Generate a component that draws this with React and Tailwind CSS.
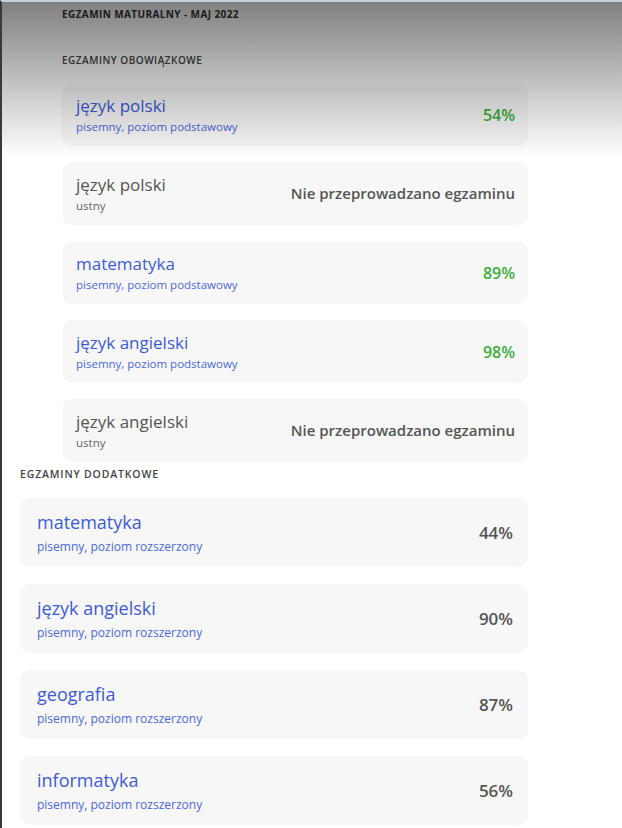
// App.jsx — wyniki egzaminu maturalnego
const OBOWIAZKOWE = [
  { nazwa: 'język polski', typ: 'pisemny, poziom podstawowy', wynik: '54%' },
  { nazwa: 'język polski', typ: 'ustny', wynik: null },
  { nazwa: 'matematyka', typ: 'pisemny, poziom podstawowy', wynik: '89%' },
  { nazwa: 'język angielski', typ: 'pisemny, poziom podstawowy', wynik: '98%' },
  { nazwa: 'język angielski', typ: 'ustny', wynik: null },
]

const DODATKOWE = [
  { nazwa: 'matematyka', typ: 'pisemny, poziom rozszerzony', wynik: '44%' },
  { nazwa: 'język angielski', typ: 'pisemny, poziom rozszerzony', wynik: '90%' },
  { nazwa: 'geografia', typ: 'pisemny, poziom rozszerzony', wynik: '87%' },
  { nazwa: 'informatyka', typ: 'pisemny, poziom rozszerzony', wynik: '56%' },
]

function KartaObowiazkowa({ nazwa, typ, wynik }) {
  const brak = wynik === null
  return (
    <div className="h-[63px] rounded-[10px] bg-[#f7f7f7] flex items-center justify-between pl-[14px] pr-[13px]">
      <div className="flex flex-col">
        <span className={`text-[17px] leading-[21px] ${brak ? 'text-[#555]' : 'text-[#3d5bd9]'}`}>{nazwa}</span>
        <span className={`text-[11.5px] leading-[14px] mt-[4px] ${brak ? 'text-[#666]' : 'text-[#4a68dc]'}`}>{typ}</span>
      </div>
      {brak
        ? <span className="text-[15px] font-semibold text-[#555]">Nie przeprowadzano egzaminu</span>
        : <span className="text-[16px] font-semibold text-[#3cad3c]">{wynik}</span>
      }
    </div>
  )
}

function KartaDodatkowa({ nazwa, typ, wynik }) {
  return (
    <div className="h-[69px] rounded-[10px] bg-[#f7f7f7] flex items-center justify-between pl-[17px] pr-[15px]">
      <div className="flex flex-col">
        <span className="text-[18px] leading-[23px] text-[#3d5bd9]">{nazwa}</span>
        <span className="text-[12px] leading-[15px] mt-[5px] text-[#4a68dc]">{typ}</span>
      </div>
      <span className="text-[17px] font-semibold text-[#555]">{wynik}</span>
    </div>
  )
}

export default function App() {
  return (
    <div
      className="relative min-h-[828px] bg-white border-l-2 border-l-[#3a3a3a] border-t-2 border-t-[#c6d0da] pr-[94px]"
      style={{ fontFamily: '"Open Sans", Lato, sans-serif' }}
    >
      <div className="pl-[60px]">
        <p className="pt-[7px] text-[10px] leading-[10px] font-bold tracking-[0.04em] text-[#333]">
          EGZAMIN MATURALNY - MAJ 2022
        </p>
        <p className="mt-[36px] text-[10px] leading-[10px] font-semibold tracking-[0.05em] text-[#444]">
          EGZAMINY OBOWIĄZKOWE
        </p>
        <div className="mt-[18px] flex flex-col gap-[16px]">
          {OBOWIAZKOWE.map((e, i) => <KartaObowiazkowa key={i} {...e} />)}
        </div>
      </div>

      <div className="pl-[18px]">
        <p className="mt-[7px] text-[10.5px] leading-[10px] font-semibold tracking-[0.08em] text-[#444]">
          EGZAMINY DODATKOWE
        </p>
        <div className="mt-[19px] flex flex-col gap-[17px]">
          {DODATKOWE.map((e, i) => <KartaDodatkowa key={i} {...e} />)}
        </div>
      </div>

      {/* przyciemnienie u góry */}
      <div className="pointer-events-none absolute left-0 right-0 top-0 h-[155px] bg-gradient-to-b from-black/50 to-transparent" />
    </div>
  )
}
